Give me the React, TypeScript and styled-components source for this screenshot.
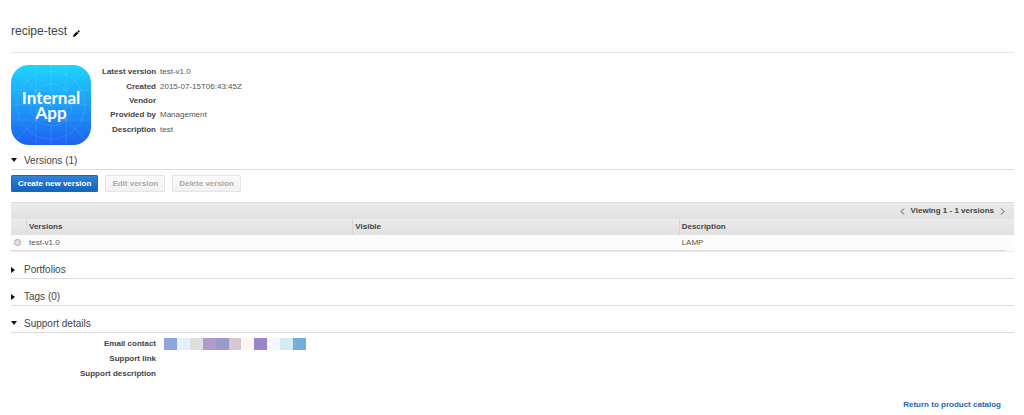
import React, { useState } from "react";
import styled, { createGlobalStyle } from "styled-components";

const GlobalStyle = createGlobalStyle`
  *, *::before, *::after { box-sizing: border-box; }
  body {
    margin: 0;
    background: #fefefe;
    color: #555;
    font-family: "Liberation Sans", Arial, sans-serif;
    font-size: 8px;
    line-height: 14px;
  }
`;

const Page = styled.main`
  padding: 24px 10px 0 11px;
`;

const TitleBar = styled.header`
  display: flex;
  align-items: flex-end;
  gap: 6px;
  padding-bottom: 14px;
  border-bottom: 1px solid #e6e6e6;
`;

const Title = styled.h1`
  margin: 0;
  font-size: 12px;
  font-weight: 400;
  line-height: 14px;
  color: #444;
`;

const IconButton = styled.button`
  display: flex;
  padding: 0;
  border: 0;
  background: none;
  color: #111;
`;

const Summary = styled.section`
  display: flex;
  gap: 11px;
  padding: 12px 0 8px;
`;

const Details = styled.dl<{ $labelWidth: number; $gap: number }>`
  display: grid;
  grid-template-columns: ${(p) => p.$labelWidth}px 1fr;
  align-items: center;
  column-gap: ${(p) => p.$gap}px;
  flex: 1;
  margin: 0;
`;

const SummaryDetails = styled(Details)`
  grid-template-rows: repeat(5, 1fr);
  height: 72px;
`;

const SupportDetails = styled(Details)`
  grid-auto-rows: 15px;
  padding-top: 3px;
`;

const Term = styled.dt`
  text-align: right;
  font-weight: 700;
  color: #444;
  white-space: nowrap;
`;

const Value = styled.dd`
  margin: 0;
`;

const Section = styled.section`
  padding-bottom: 10px;
`;

const SectionTitle = styled.h2`
  margin: 0;
  border-bottom: 1px solid #dcdcdc;
  font-size: 10px;
  font-weight: 400;
  line-height: 16px;
`;

const Toggle = styled.button`
  display: flex;
  align-items: center;
  gap: 6px;
  width: 100%;
  padding: 0;
  border: 0;
  background: none;
  color: #444;
  font: inherit;
  text-align: left;
`;

const Actions = styled.div`
  display: flex;
  gap: 7px;
  padding: 5px 0 10px;
`;

const Button = styled.button<{ $primary?: boolean }>`
  height: 17px;
  padding: 0 6px;
  border: 1px solid ${(p) => (p.$primary ? "#1c68bc" : "#e4e4e4")};
  border-radius: 1px;
  background: ${(p) => (p.$primary ? "linear-gradient(#2f83d8, #1464b8)" : "linear-gradient(#fafafa, #f1f1f1)")};
  color: ${(p) => (p.$primary ? "#fff" : "#aaa")};
  font: 700 8px/14px "Liberation Sans", Arial, sans-serif;
  white-space: nowrap;
`;

const Pager = styled.nav`
  display: flex;
  justify-content: flex-end;
  align-items: center;
  gap: 6px;
  height: 17px;
  padding-right: 9px;
  border-top: 1px solid #dcdcdc;
  background: linear-gradient(#ebebeb, #e1e1e1);
  color: #444;
  font-weight: 700;
`;

const Table = styled.table`
  width: 100%;
  table-layout: fixed;
  border-collapse: separate;
  border-spacing: 0;
  border-bottom: 1px solid #ececec;
`;

const Column = styled.col<{ $width?: number }>`
  width: ${(p) => (p.$width ? `${p.$width}px` : "auto")};
`;

const HeadRow = styled.tr`
  background: linear-gradient(#ececec, #e0e0e0);
`;

const Head = styled.th`
  height: 16px;
  padding: 0 2px;
  border-left: 1px solid #d6d6d6;
  color: #444;
  text-align: left;
  line-height: 14px;
  &:first-child { border-left: 0; }
`;

const Cell = styled.td<{ $plain?: boolean }>`
  height: 16px;
  padding: 0 3px;
  border-bottom: ${(p) => (p.$plain ? "0" : "1px solid #d8d8d8")};
  background: #fcfcfc;
  line-height: 14px;
`;

const Radio = styled.input`
  display: block;
  appearance: none;
  width: 7px;
  height: 7px;
  margin: 0;
  border: 1px solid #aaa;
  border-radius: 50%;
  background: #e2e2e2;
  &:checked { background: #555; }
`;

const Mosaic = styled.div`
  display: flex;
  width: 142px;
  height: 12px;
`;

const Tile = styled.span<{ $color: string }>`
  flex: 1;
  background: ${(p) => p.$color};
`;

const Footer = styled.footer`
  display: flex;
  justify-content: flex-end;
  padding: 7px 13px 3px 0;
`;

const CatalogLink = styled.a`
  color: #2468b4;
  font-weight: 700;
  text-decoration: none;
`;

const tiles = ["#8fa5d9", "#e3f1f9", "#dde0df", "#b29acb", "#999bcb", "#d6c8d2", "#fdf6f4", "#9b85c9", "#f3f8fc", "#d3edf2", "#70aede"];

function AppIcon() {
  return (
    <svg width="80" height="80" viewBox="0 0 80 80" role="img" aria-label="Internal App">
      <defs>
        <linearGradient id="sky" x1="0" y1="0" x2="0" y2="1">
          <stop offset="0" stopColor="#1dd5fd" />
          <stop offset="1" stopColor="#1d62f0" />
        </linearGradient>
        <clipPath id="tile"><rect width="80" height="80" rx="18" /></clipPath>
      </defs>
      <g clipPath="url(#tile)">
        <rect width="80" height="80" fill="url(#sky)" />
        <g fill="none" stroke="#fff" strokeOpacity="0.14" strokeWidth="0.7">
          <path d="M25 0V80M40 0V80M55 0V80M0 25H80M0 40H80M0 55H80M0 0L80 80M80 0L0 80" />
          <circle cx="40" cy="40" r="34" />
          <circle cx="40" cy="40" r="21" />
        </g>
        <g fill="#fff" fontFamily="Lato, sans-serif" fontWeight="700" fontSize="17" textAnchor="middle">
          <text x="40" y="39">Internal</text>
          <text x="40" y="54">App</text>
        </g>
      </g>
    </svg>
  );
}

function Chevron({ left }: { left?: boolean }) {
  return (
    <svg width="5" height="7" viewBox="0 0 5 7" fill="none" stroke="#555" strokeWidth="1" aria-hidden="true">
      <path d={left ? "M4 0.500L1 3.500L4 6.500" : "M1 0.500L4 3.500L1 6.500"} />
    </svg>
  );
}

function Panel({ title, initial, children }: { title: string; initial?: boolean; children?: React.ReactNode }) {
  const [open, setOpen] = useState(!!initial);
  return (
    <Section>
      <SectionTitle>
        <Toggle type="button" aria-expanded={open} onClick={() => setOpen(!open)}>
          <svg width="7" height="8" viewBox="0 0 7 8" fill="#111" aria-hidden="true">
            <path d={open ? "M0 1H6L3 5Z" : "M0 1V7L4 4Z"} />
          </svg>
          {title}
        </Toggle>
      </SectionTitle>
      {open && children}
    </Section>
  );
}

export default function App() {
  const [picked, setPicked] = useState(false);
  return (
    <>
      <GlobalStyle />
      <Page>
        <TitleBar>
          <Title>recipe-test</Title>
          <IconButton type="button" aria-label="Edit name">
            <svg width="7" height="8" viewBox="0 0 7 8" fill="currentColor" aria-hidden="true">
              <path d="M0 7L0.500 4.800L3.800 1.600L5.400 3.200L2.200 6.500ZM4.300 1.100L5 0.400Q5.500 0 6 0.500L6.600 1.100Q7 1.600 6.500 2.100L5.900 2.700Z" />
            </svg>
          </IconButton>
        </TitleBar>

        <Summary>
          <AppIcon />
          <SummaryDetails $labelWidth={54} $gap={4}>
            <Term>Latest version</Term><Value>test-v1.0</Value>
            <Term>Created</Term><Value>2015-07-15T06:43:45Z</Value>
            <Term>Vendor</Term><Value />
            <Term>Provided by</Term><Value>Management</Value>
            <Term>Description</Term><Value>test</Value>
          </SummaryDetails>
        </Summary>

        <Panel title="Versions (1)" initial>
          <Actions>
            <Button type="button" $primary>Create new version</Button>
            <Button type="button" disabled>Edit version</Button>
            <Button type="button" disabled>Delete version</Button>
          </Actions>
          <Pager aria-label="Versions pages">
            <IconButton type="button" aria-label="Previous"><Chevron left /></IconButton>
            Viewing 1 - 1 versions
            <IconButton type="button" aria-label="Next"><Chevron /></IconButton>
          </Pager>
          <Table>
            <colgroup>
              <Column $width={15} /><Column /><Column /><Column /><Column $width={9} />
            </colgroup>
            <thead>
              <HeadRow>
                <Head aria-label="Select" />
                <Head scope="col">Versions</Head>
                <Head scope="col">Visible</Head>
                <Head scope="col" colSpan={2}>Description</Head>
              </HeadRow>
            </thead>
            <tbody>
              <tr>
                <Cell><Radio type="radio" name="version" aria-label="test-v1.0" checked={picked} onChange={() => setPicked(true)} /></Cell>
                <Cell>test-v1.0</Cell>
                <Cell />
                <Cell>LAMP</Cell>
                <Cell $plain />
              </tr>
            </tbody>
          </Table>
        </Panel>

        <Panel title="Portfolios" />
        <Panel title="Tags (0)" />
        <Panel title="Support details" initial>
          <SupportDetails $labelWidth={145} $gap={8}>
            <Term>Email contact</Term>
            <Value><Mosaic>{tiles.map((c) => <Tile key={c} $color={c} />)}</Mosaic></Value>
            <Term>Support link</Term><Value />
            <Term>Support description</Term><Value />
          </SupportDetails>
        </Panel>

        <Footer><CatalogLink href="#catalog">Return to product catalog</CatalogLink></Footer>
      </Page>
    </>
  );
}
